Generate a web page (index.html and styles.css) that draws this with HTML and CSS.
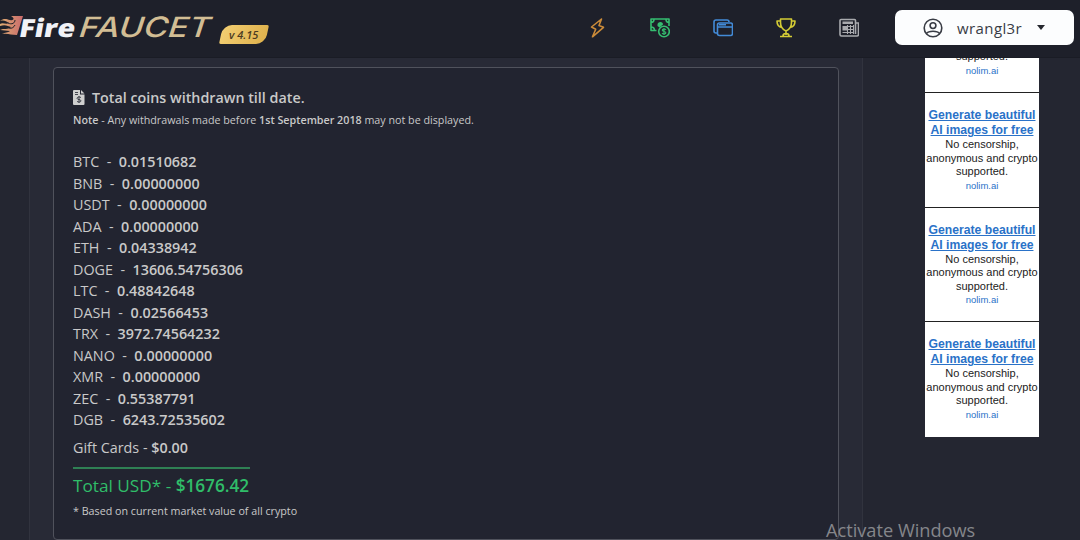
FILE: index.html
```html
<!DOCTYPE html>
<html lang="en">
<head>
    <meta charset="UTF-8">
    <meta name="viewport" content="width=device-width, initial-scale=1.0">
    <title>Fire Faucet</title>
    <link rel="stylesheet" href="styles.css">
</head>
<body>
    <header class="navbar">
        <div class="brand">
            <svg class="logo" width="216" height="30" viewBox="0 0 216 30">
                <defs>
                    <linearGradient id="flame" x1="0" x2="1">
                        <stop offset="0" stop-color="#e0ad72"/>
                        <stop offset="1" stop-color="#c96a6c"/>
                    </linearGradient>
                </defs>
                <path fill="url(#flame)" d="M23 3H11C15 5 14 8 10 7C6 6 4 5 0 8C4 7 6 8 9 10C6 12 3 9 0 11V13C5 11 8 13 11 14C8 17 4 15 0 17C4 17 6 18 10 18C8 20 5 19 2 21C8 20 11 22 17 22Z"/>
                <path fill="none" stroke="#1e202a" stroke-width="1" d="M8 10C12 12 15 10 15 7M9 15C12 16 14 14 15 12"/>
                <text class="logo-fire" transform="translate(18 23.5) skewX(-10)" textLength="56" lengthAdjust="spacingAndGlyphs">Fire</text>
                <text class="logo-faucet" transform="translate(77 24) skewX(-18)" textLength="131" lengthAdjust="spacingAndGlyphs">FAUCET</text>
            </svg>
            <span class="version"><span>v 4.15</span></span>
        </div>

        <nav class="nav-icons">
            <!-- Bolt -->
            <svg class="bolt" viewBox="0 0 20 20"><path d="M14.500 1L4.500 9l4.200 2.200L5.500 18.800 16.500 9.300 12 7.500z"/></svg>
            <!-- Cash -->
            <svg class="cash" viewBox="0 0 20 20">
                <path d="M6.500 12.500H1V1h18v7M1 4.500c2 0 3-1.500 3-3.500M16 1c0 2 1 3.500 3 3.500M1 9c2 0 3.500 1.500 3.500 3.500"/>
                <path class="filled" d="M7.500 8V6.500C7.500 5 9 4 10.500 4S13 5 13 6.500L9.500 9.500z"/>
                <circle cx="14" cy="13.500" r="5.300"/>
                <path class="thin" d="M16 11.700c-1-1.100-3.700-.9-3.700.6 0 1.600 3.600.8 3.600 2.500 0 1.500-2.900 1.600-3.900.4M14 10v7"/>
            </svg>
            <!-- Wallet cards -->
            <svg class="cards" viewBox="0 0 20 20">
                <rect x="4.500" y="5" width="15" height="12.500" rx="2"/>
                <path d="M4 15H3q-2 0-2-2V4q0-2 2-2h11q2 0 2 2M4.500 9h15M6 6.700h7"/>
            </svg>
            <!-- Trophy -->
            <svg class="trophy" viewBox="0 0 20 20">
                <path d="M4.500 1h11v3.500c0 5-2 7-5.500 8.500-3.500-1.500-5.500-3.500-5.500-8.500zM4.500 3H1c0 4 1.500 6 5 6.500M15.500 3H19c0 4-1.500 6-5 6.500M10 13v4M4 18.500h12M7 18c0-2 1.300-2.500 3-2.500s3 .5 3 2.500"/>
            </svg>
            <!-- News -->
            <svg class="news" viewBox="0 0 20 20">
                <path d="M16.500 16V2.500q0-1-1-1H2q-1 0-1 1v14q0 1.500 1.500 1.500H18q1.500 0 1.500-1.500V5h-3"/>
                <path class="filled" d="M3.500 3.500h10.500v2.500H3.500zM3.500 8h4.500v4.500h-4.500z"/>
                <path class="thin" d="M9 8.500h5.500M9 11.500h5.500M3.500 14.500h11M11.500 7v9M8.500 7v9M14.500 7v9"/>
            </svg>
        </nav>

        <div class="user">
            <svg class="avatar" viewBox="0 0 20 20">
                <circle cx="10" cy="10" r="8.800"/>
                <circle cx="10" cy="7.600" r="2.900"/>
                <path d="M3.500 15.500C5.500 12.500 14.500 12.500 16.500 15.500"/>
            </svg>
            <span class="username">wrangl3r</span>
            <span class="caret"></span>
        </div>
    </header>

    <div class="page">
        <main class="panel">
            <section class="card">
                <h3>
                    <svg width="12" height="15" viewBox="0 0 12 15">
                        <path fill="#cfcfcf" d="M1 0h6v4.500h4.500V14q0 1-1 1H1q-1 0-1-1V1q0-1 1-1zM8 0l3.500 3.500H8z"/>
                        <path fill="none" stroke="#222430" stroke-width=".8" d="M2 2.500h3M2 4.500h3M8 7.500C6.500 6.500 4 7 4 8.300c0 1.700 4 .8 4 2.600 0 1.300-2.700 1.500-4 .5M6 6v7"/>
                    </svg>
                    <span>Total coins withdrawn till date.</span>
                </h3>
                <p class="note"><b>Note</b> - Any withdrawals made before <b>1st September 2018</b> may not be displayed.</p>

                <ul class="coins">
                    <li>BTC &nbsp;-&nbsp; <b>0.01510682</b></li>
                    <li>BNB &nbsp;-&nbsp; <b>0.00000000</b></li>
                    <li>USDT &nbsp;-&nbsp; <b>0.00000000</b></li>
                    <li>ADA &nbsp;-&nbsp; <b>0.00000000</b></li>
                    <li>ETH &nbsp;-&nbsp; <b>0.04338942</b></li>
                    <li>DOGE &nbsp;-&nbsp; <b>13606.54756306</b></li>
                    <li>LTC &nbsp;-&nbsp; <b>0.48842648</b></li>
                    <li>DASH &nbsp;-&nbsp; <b>0.02566453</b></li>
                    <li>TRX &nbsp;-&nbsp; <b>3972.74564232</b></li>
                    <li>NANO &nbsp;-&nbsp; <b>0.00000000</b></li>
                    <li>XMR &nbsp;-&nbsp; <b>0.00000000</b></li>
                    <li>ZEC &nbsp;-&nbsp; <b>0.55387791</b></li>
                    <li>DGB &nbsp;-&nbsp; <b>6243.72535602</b></li>
                </ul>
                <p class="gift">Gift Cards - <b>$0.00</b></p>
                <p class="total">Total USD* - <b>$1676.42</b></p>
                <p class="footnote">* Based on current market value of all crypto</p>
            </section>
        </main>

        <aside class="ads">
            <div class="ad ad-scrolled">
                <p>supported.</p>
                <a class="ad-link">nolim.ai</a>
            </div>
            <div class="ad">
                <a class="ad-title">Generate beautiful<br>AI images for free</a>
                <p>No censorship,<br>anonymous and crypto<br>supported.</p>
                <a class="ad-link">nolim.ai</a>
            </div>
            <div class="ad">
                <a class="ad-title">Generate beautiful<br>AI images for free</a>
                <p>No censorship,<br>anonymous and crypto<br>supported.</p>
                <a class="ad-link">nolim.ai</a>
            </div>
            <div class="ad">
                <a class="ad-title">Generate beautiful<br>AI images for free</a>
                <p>No censorship,<br>anonymous and crypto<br>supported.</p>
                <a class="ad-link">nolim.ai</a>
            </div>
        </aside>
    </div>

    <div class="watermark">Activate Windows</div>
</body>
</html>
```
FILE: styles.css
```css
* {
    box-sizing: border-box;
}

body {
    font-family: "Open Sans", sans-serif;
    margin: 0;
    height: 540px;
    overflow: hidden;
    background-color: #242631;
    color: #c9c9c9;
}

p, h3, ul {
    margin: 0;
    padding: 0;
}

b {
    font-weight: 600;
}

/* Navbar */
.navbar {
    display: flex;
    align-items: flex-start;
    height: 58px;
    background-color: #1e202a;
    border-bottom: 1px solid #1a1c25;
}

.brand {
    display: flex;
    width: 587px;
    padding-top: 13px;
}

.logo {
    flex: none;
    overflow: visible;
}

.logo-fire {
    font: 800 25px "Open Sans", sans-serif;
    fill: #f1f2f7;
}

.logo-faucet {
    font: 500 28px Inter, sans-serif;
    fill: #d2bd94;
}

.version {
    display: flex;
    align-items: center;
    justify-content: center;
    width: 46px;
    height: 19px;
    margin: 12px 0 0 5px;
    border-radius: 9px 2px 9px 2px;
    background: linear-gradient(100deg, #f2ce72, #dfb14c);
    transform: skewX(-12deg);
    color: #4b3c22;
    font-size: 11px;
    font-style: italic;
    font-weight: 600;
}

.version span {
    transform: skewX(12deg);
}

.nav-icons {
    display: flex;
    gap: 43px;
    padding-top: 18px;
}

.nav-icons svg,
.avatar {
    width: 20px;
    height: 20px;
    fill: none;
    stroke: currentColor;
    stroke-width: 1.6;
    stroke-linejoin: round;
}

.nav-icons .filled {
    fill: currentColor;
    stroke: none;
}

.nav-icons .thin {
    stroke-width: 1.1;
}

.bolt { color: #cb8b39; }
.cash { color: #35bd70; }
.cards { color: #438bd8; }
.trophy { color: #d4cb35; }
.news { color: #a9aaae; }

.user {
    display: flex;
    align-items: center;
    width: 179px;
    height: 35px;
    margin: 10px 0 0 36px;
    padding-left: 28px;
    border-radius: 7px;
    background-color: #fcfdfe;
    color: #393c45;
}

.username {
    width: 66px;
    margin: 0 14px 0 14px;
    font-size: 15px;
    font-weight: 500;
    letter-spacing: 0.4px;
}

.caret {
    border: 4.5px solid transparent;
    border-top: 5px solid #25272e;
    border-bottom: 0;
}

/* Content */
.page {
    display: flex;
    height: 482px;
    overflow: hidden;
}

.panel {
    width: 834px;
    margin-left: 29px;
    padding: 9px 23px 0;
    background-color: #282a36;
    border: 1px solid #31333e;
    border-width: 0 1px;
}

.card {
    height: 473px;
    padding: 19px 19px 0;
    background-color: #222430;
    border: 1px solid #50525c;
    border-radius: 4px;
}

.card h3 {
    display: flex;
    align-items: center;
    gap: 7px;
    height: 20px;
    font-size: 14.3px;
    font-weight: 600;
}

.note {
    height: 16px;
    margin-top: 5px;
    font-size: 10.73px;
    line-height: 16px;
}

.coins {
    margin-top: 23px;
    list-style: none;
    font-size: 14.35px;
    line-height: 21.5px;
}

.gift {
    margin-top: 6px;
    font-size: 14.35px;
    line-height: 21px;
}

.total {
    width: 177px;
    margin-top: 9px;
    padding-top: 5px;
    border-top: 2px solid #2f8054;
    color: #30bd69;
    font-size: 17.2px;
    line-height: 24px;
    white-space: nowrap;
}

.footnote {
    margin-top: 5px;
    font-size: 10.73px;
    line-height: 16px;
}

/* Ads column */
.ads {
    align-self: flex-start;
    width: 114px;
    margin-left: 62px;
    padding-bottom: 1px;
    background-color: #fff;
}

.ad {
    height: 114.5px;
    padding-top: 15px;
    border-top: 1px solid #222;
    color: #222;
    font-family: "Liberation Sans", Arial, sans-serif;
    font-size: 11px;
    line-height: 13.5px;
    text-align: center;
    white-space: nowrap;
}

/* first ad is partly scrolled under the navbar */
.ad-scrolled {
    height: 42px;
    margin-top: -8px;
    padding-top: 0;
    border-top: 0;
}

.ad-title {
    display: block;
    color: #2a72c8;
    font-size: 12.2px;
    font-weight: bold;
    line-height: 15px;
    text-decoration: underline;
}

.ad-link {
    display: block;
    color: #2a72c8;
    font-size: 9.5px;
    line-height: 13px;
}

.watermark {
    position: absolute;
    left: 826px;
    top: 518px;
    color: #85868b;
    font-size: 18.2px;
    line-height: 24px;
}
```
